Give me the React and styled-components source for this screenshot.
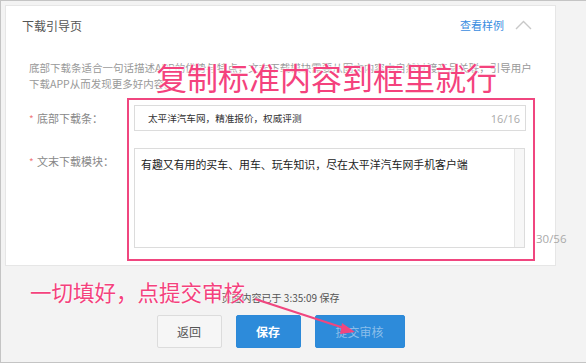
import React from "react";
import styled, { createGlobalStyle } from "styled-components";

const Global = createGlobalStyle`
  html, body { margin: 0; padding: 0; background: #f3f3f3; }
  body { font-family: "Noto Sans CJK SC", "Noto Sans", sans-serif; }
  * { box-sizing: border-box; }
`;

const Frame = styled.div`
  position: relative;
  width: 586px;
  height: 363px;
  background: #f3f3f3;
  border-top: 1px solid #c4c4c4;
  border-left: 1px solid #c4c4c4;
  border-bottom: 1px solid #c4c4c4;
  padding: 4px 0 0 4px;
  overflow: hidden;
`;

const Column = styled.div`
  width: 551px;
  display: flex;
  flex-direction: column;
`;

const Card = styled.section`
  height: 261px;
  background: #fff;
  border: 1px solid #e6e6e6;
  display: flex;
  flex-direction: column;
`;

const Header = styled.header`
  height: 38px;
  padding: 0 23px 0 16px;
  display: flex;
  align-items: center;
  justify-content: space-between;
`;

const Title = styled.h2`
  margin: 0;
  font-size: 12px;
  font-weight: 400;
  color: #555;
`;

const HeaderActions = styled.div`
  display: flex;
  align-items: center;
  gap: 11px;
`;

const LinkText = styled.a`
  font-size: 11px;
  color: #3a8ddf;
  text-decoration: none;
`;

const Description = styled.p`
  margin: 16px 0 0 23px;
  font-size: 10.5px;
  line-height: 16px;
  color: #999;
  white-space: nowrap;
`;

const Form = styled.div`
  margin-top: 13px;
  display: flex;
  flex-direction: column;
  gap: 16px;
  padding-left: 23px;
`;

const Row = styled.div`
  display: flex;
  align-items: flex-start;
`;

const Label = styled.label`
  width: 105px;
  font-size: 11px;
  line-height: 27px;
  color: #888;
  display: flex;
  align-items: center;
  gap: 2px;
`;

const Star = styled.span`
  color: #f07c7c;
  font-size: 10px;
  width: 6px;
`;

const InputBox = styled.div`
  width: 392px;
  height: 26px;
  border: 1px solid #dcdcdc;
  display: flex;
  align-items: center;
  justify-content: space-between;
  padding: 0 5px 0 13px;
`;

const InputText = styled.span`
  font-size: 9.6px;
  color: #333;
`;

const Counter = styled.span`
  font-size: 11px;
  color: #aaa;
  font-family: "Open Sans", "Noto Sans", sans-serif;
`;

const AreaWrap = styled.div`
  position: relative;
  width: 391px;
  height: 100px;
  border: 1px solid #dcdcdc;
  display: flex;
`;

const AreaText = styled.div`
  flex: 1;
  padding: 5px 6px;
  font-size: 10.9px;
  line-height: 20px;
  color: #222;
`;

const ScrollTrack = styled.div`
  width: 10px;
  background: #f7f7f7;
  border-left: 1px solid #e6e6e6;
`;

const AreaCounter = styled(Counter)`
  position: absolute;
  left: calc(100% + 12px);
  bottom: 1px;
  font-size: 11.5px;
`;

const Footer = styled.footer`
  display: flex;
  flex-direction: column;
  align-items: center;
  padding-top: 26px;
  gap: 11px;
`;

const SaveInfo = styled.div`
  font-size: 10px;
  line-height: 12px;
  color: #555;
`;

const Buttons = styled.div`
  display: flex;
  gap: 14px;
`;

const Button = styled.button`
  height: 33px;
  width: ${(p) => p.$w}px;
  font-family: inherit;
  font-size: 12px;
  border-radius: 2px;
  border: 1px solid ${(p) => (p.$primary ? "#2c89d8" : "#dcdcdc")};
  background: ${(p) => (p.$primary ? "#2d8bda" : "#f6f6f6")};
  color: ${(p) => (p.$primary ? (p.$dim ? "rgba(255,255,255,0.45)" : "#fff") : "#555")};
  font-weight: ${(p) => (p.$primary && !p.$dim ? 700 : 400)};
  padding: 0;
`;

const BigNote = styled.div`
  position: absolute;
  left: 155px;
  top: 58px;
  font-size: 31px;
  line-height: 36px;
  color: #f4427d;
  white-space: nowrap;
  text-shadow: 0 0 2px #fff, 0 0 2px #fff, 0 0 3px #fff;
`;

const SmallNote = styled.div`
  position: absolute;
  left: 29px;
  top: 278px;
  font-size: 21.5px;
  line-height: 26px;
  color: #f4427d;
  white-space: nowrap;
  text-shadow: 0 0 2px #fff, 0 0 2px #fff;
`;

const Highlight = styled.div`
  position: absolute;
  left: 126px;
  top: 97px;
  width: 408px;
  height: 163px;
  border: 2.5px solid #f0467f;
`;

const ArrowSvg = styled.svg`
  position: absolute;
  left: 0;
  top: 0;
  pointer-events: none;
`;

function Chevron() {
  return (
    <svg width="17" height="10" viewBox="0 0 17 10">
      <polyline points="1,9 8.5,1.5 16,9" fill="none" stroke="#c8c8c8" strokeWidth="1.4" />
    </svg>
  );
}

export default function App() {
  return (
    <>
      <Global />
      <Frame>
        <Column>
          <Card>
            <Header>
              <Title>下载引导页</Title>
              <HeaderActions>
                <LinkText href="#">查看样例</LinkText>
                <Chevron />
              </HeaderActions>
            </Header>
            <Description>
              底部下载条适合一句话描述APP的优势与特点，文末下载模块需要从图文内容中自然过渡产品关联，引导用户
              <br />
              下载APP从而发现更多好内容。
            </Description>
            <Form>
              <Row>
                <Label>
                  <Star>*</Star>底部下载条：
                </Label>
                <InputBox>
                  <InputText>太平洋汽车网，精准报价，权威评测</InputText>
                  <Counter>16/16</Counter>
                </InputBox>
              </Row>
              <Row>
                <Label>
                  <Star>*</Star>文末下载模块：
                </Label>
                <AreaWrap>
                  <AreaText>有趣又有用的买车、用车、玩车知识，尽在太平洋汽车网手机客户端</AreaText>
                  <ScrollTrack />
                  <AreaCounter>30/56</AreaCounter>
                </AreaWrap>
              </Row>
            </Form>
          </Card>
          <Footer>
            <SaveInfo>页面内容已于 3:35:09 保存</SaveInfo>
            <Buttons>
              <Button $w={65}>返回</Button>
              <Button $w={65} $primary>保存</Button>
              <Button $w={90} $primary $dim>提交审核</Button>
            </Buttons>
          </Footer>
        </Column>
        <Highlight />
        <BigNote>复制标准内容到框里就行</BigNote>
        <SmallNote>一切填好，点提交审核</SmallNote>
        <ArrowSvg width="586" height="363" viewBox="0 0 586 363">
          <line x1="254" y1="298" x2="346" y2="328" stroke="#f0467f" strokeWidth="2.2" />
          <polygon points="354,331 341,322 339,333" fill="#f0467f" />
        </ArrowSvg>
      </Frame>
    </>
  );
}
